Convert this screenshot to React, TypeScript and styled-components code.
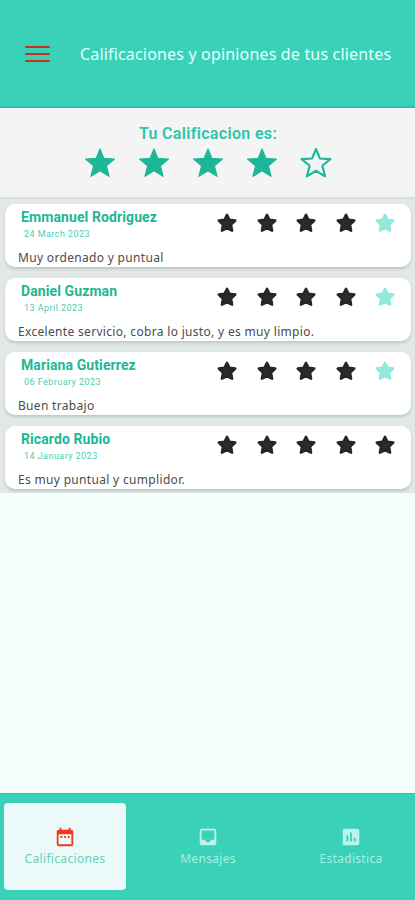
import React from "react";
import styled, { createGlobalStyle } from "styled-components";
import { MdAssessment, MdDateRange, MdInbox } from "react-icons/md";

const GlobalStyle = createGlobalStyle`
  * { box-sizing: border-box; }
  body { margin: 0; background: #f4fffc; font-family: "Noto Sans", sans-serif; }
`;

const Screen = styled.div`
  width: 415px;
  height: 900px;
  display: flex;
  flex-direction: column;
  overflow: hidden;
  background: #f4fffc;
`;

const Header = styled.header`
  height: 108px;
  flex: none;
  display: flex;
  align-items: center;
  padding: 0 0 0 25px;
  background: #3ad1b9;
  border-bottom: 2px solid #2cbfa6;
`;

const MenuButton = styled.button`
  width: 25px;
  height: 17px;
  padding: 0;
  border: 0;
  background: none;
  display: flex;
  flex-direction: column;
  justify-content: space-between;
  margin-top: 2px;
`;

const MenuLine = styled.span`
  height: 2.4px;
  width: 25px;
  background: #cf2e20;
  border-radius: 1px;
`;

const Title = styled.h1`
  margin: 2px 0 0 30px;
  font-size: 16px;
  font-weight: 400;
  line-height: 24px;
  letter-spacing: 0.17px;
  white-space: nowrap;
  color: #e4fffa;
`;

const Summary = styled.section`
  height: 89px;
  flex: none;
  display: flex;
  flex-direction: column;
  align-items: center;
  padding-top: 15px;
  background: #f4f4f4;
  border-top: 1px solid #fff;
`;

const SummaryTitle = styled.h2`
  margin: 0 0 0 1px;
  font: 600 16px/20px Roboto, sans-serif;
  letter-spacing: 0.33px;
  color: #2fc4a7;
`;

const SummaryStars = styled.div`
  display: flex;
  gap: 21.8px;
  margin: 3px 0 0 1px;
`;

const Reviews = styled.main`
  height: 296px;
  flex: none;
  display: flex;
  flex-direction: column;
  gap: 10.9px;
  padding: 5px 4px 0 5px;
  background: #e1e8e6;
  border-top: 2px solid #d7dfdd;
`;

const Card = styled.article`
  height: 63px;
  flex: none;
  display: flex;
  flex-direction: column;
  background: #fff;
  border-radius: 10px;
  box-shadow: 0 2px 3px rgba(60, 85, 80, 0.22);
`;

const CardTop = styled.div`
  display: flex;
  justify-content: space-between;
  height: 45px;
  padding: 4px 16px 0 16px;
`;

const Name = styled.h3`
  margin: 0;
  font: 700 14px/18px Roboto, sans-serif;
  letter-spacing: 0.1px;
  color: #20b795;
`;

const ReviewDate = styled.time`
  display: block;
  margin: 2px 0 0 3px;
  font: 400 9px/12px Roboto, sans-serif;
  letter-spacing: 0.45px;
  color: #4ccdb2;
`;

const CardStars = styled.div`
  display: flex;
  gap: 19.4px;
  margin-top: 5px;
`;

const Comment = styled.p`
  margin: 0 0 0 13px;
  font-size: 12px;
  line-height: 18px;
  letter-spacing: 0.32px;
  white-space: nowrap;
  color: #4c4c4c;
`;

const TabBar = styled.nav`
  height: 107px;
  flex: none;
  margin-top: auto;
  display: grid;
  grid-template-columns: 122px 122px 122px;
  justify-content: space-between;
  padding: 9px 3px 10px 4px;
  background: #3ad1b9;
  border-top: 1px solid #24cbb0;
`;

const Tab = styled.button<{ $active?: boolean }>`
  border: 0;
  border-radius: 4px;
  padding: 1px 0 0;
  display: flex;
  flex-direction: column;
  align-items: center;
  justify-content: center;
  background: ${(p) => (p.$active ? "#ebf9f8" : "transparent")};
  color: ${(p) => (p.$active ? "#f03a20" : "#bdf3e8")};
  svg { display: block; }
`;

const TabLabel = styled.span<{ $active?: boolean }>`
  margin-top: 1px;
  font: 400 12px/20px "Noto Sans", sans-serif;
  letter-spacing: 0.32px;
  color: ${(p) => (p.$active ? "#65d3bb" : "#a9eee0")};
`;

const BigStar = ({ filled }: { filled: boolean }) => (
  <svg width="32" height="32" viewBox="0 0 24 24">
    <polygon
      points="12,1.5 14.9,8.6 22.8,9.1 16.8,14.1 18.8,22 12,17.8 5.2,22 7.2,14.1 1.2,9.1 9.1,8.6"
      fill={filled ? "#1cb798" : "none"}
      stroke="#1cb798"
      strokeWidth={filled ? 0.9 : 1.6}
      strokeLinejoin="round"
    />
  </svg>
);

const SmallStar = ({ filled }: { filled: boolean }) => (
  <svg width="20" height="20" viewBox="0 0 24 24">
    <polygon
      points="12,2.2 14.8,8 21.9,9 16.9,13.9 18.1,21.2 12,18.1 5.9,21.2 7.1,13.9 2.1,9 9.2,8"
      fill={filled ? "#2b2b2b" : "#93e9da"}
      stroke={filled ? "#262626" : "#93e9da"}
      strokeWidth="3"
      strokeLinejoin="round"
    />
  </svg>
);

const reviews = [
  { name: "Emmanuel Rodriguez", date: "24 March 2023", text: "Muy ordenado y puntual", stars: 4 },
  { name: "Daniel Guzman", date: "13 April 2023", text: "Excelente servicio, cobra lo justo, y es muy limpio.", stars: 4 },
  { name: "Mariana Gutierrez", date: "06 February 2023", text: "Buen trabajo", stars: 4 },
  { name: "Ricardo Rubio", date: "14 January 2023", text: "Es muy puntual y cumplidor.", stars: 5 },
];

const SLOTS = [1, 2, 3, 4, 5];

export default function App() {
  return (
    <Screen>
      <GlobalStyle />
      <Header>
        <MenuButton aria-label="Menu">
          <MenuLine />
          <MenuLine />
          <MenuLine />
        </MenuButton>
        <Title>Calificaciones y opiniones de tus clientes</Title>
      </Header>
      <Summary>
        <SummaryTitle>Tu Calificacion es:</SummaryTitle>
        <SummaryStars>
          {SLOTS.map((n) => <BigStar key={n} filled={n <= 4} />)}
        </SummaryStars>
      </Summary>
      <Reviews>
        {reviews.map((r) => (
          <Card key={r.name}>
            <CardTop>
              <div>
                <Name>{r.name}</Name>
                <ReviewDate>{r.date}</ReviewDate>
              </div>
              <CardStars>
                {SLOTS.map((n) => <SmallStar key={n} filled={n <= r.stars} />)}
              </CardStars>
            </CardTop>
            <Comment>{r.text}</Comment>
          </Card>
        ))}
      </Reviews>
      <TabBar>
        <Tab $active>
          <MdDateRange size={22} />
          <TabLabel $active>Calificaciones</TabLabel>
        </Tab>
        <Tab>
          <MdInbox size={22} />
          <TabLabel>Mensajes</TabLabel>
        </Tab>
        <Tab>
          <MdAssessment size={22} />
          <TabLabel>Estadistica</TabLabel>
        </Tab>
      </TabBar>
    </Screen>
  );
}
